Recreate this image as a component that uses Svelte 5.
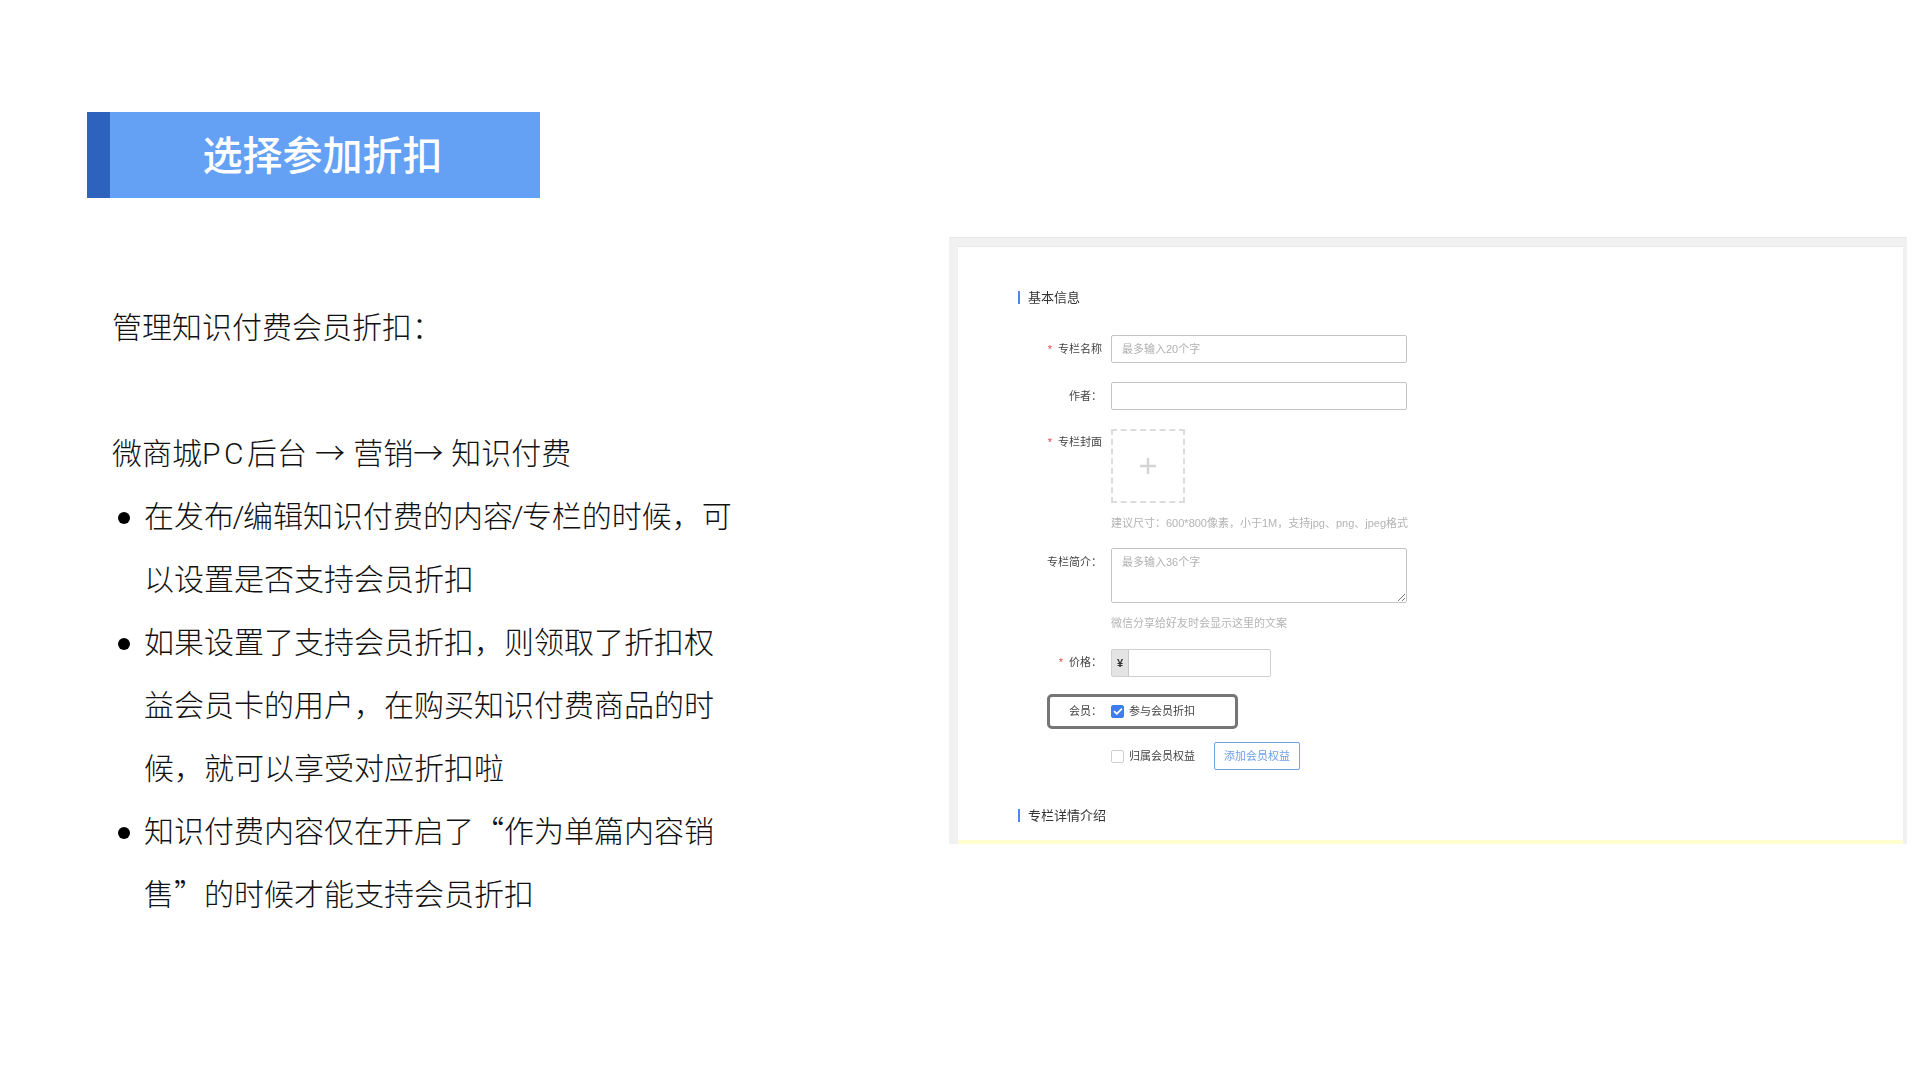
<script>
  const bullets = [
    '在发布/编辑知识付费的内容/专栏的时候，可以设置是否支持会员折扣',
    '如果设置了支持会员折扣，则领取了折扣权益会员卡的用户，在购买知识付费商品的时候，就可以享受对应折扣啦',
    '知识付费内容仅在开启了“作为单篇内容销售”的时候才能支持会员折扣'
  ];
</script>

<div class="page">
  <div class="left">
    <div class="banner"><h1>选择参加折扣</h1></div>
    <div class="copy">
      <p>管理知识付费会员折扣：</p>
      <p class="blank"></p>
      <p class="path">微商城<span class="latin">PC</span>后台 → 营销→ 知识付费</p>
      <ul>
        {#each bullets as item}
          <li>
            <span class="dot"></span>
            <span class="item">{#each item.split('/') as part, i}{#if i}<span class="slash">/</span>{/if}{part}{/each}</span>
          </li>
        {/each}
      </ul>
    </div>
  </div>

  <div class="shot">
    <div class="sheet">
      <div class="section first">基本信息</div>

      <div class="row name">
        <label><i>*</i>专栏名称</label>
        <div class="input wide placeholder">最多输入20个字</div>
      </div>

      <div class="row author">
        <label>作者：</label>
        <div class="input wide"></div>
      </div>

      <div class="row cover">
        <label><i>*</i>专栏封面</label>
        <div class="upload">
          <svg width="18" height="18" viewBox="0 0 18 18"><path d="M9 1v16M1 9h16" stroke="#d4d4d4" stroke-width="2.4" fill="none" /></svg>
        </div>
      </div>
      <div class="hint cover-hint">建议尺寸：600*800像素，小于1M，支持jpg、png、jpeg格式</div>

      <div class="row intro">
        <label>专栏简介：</label>
        <div class="textarea placeholder">
          最多输入36个字
          <svg class="grip" width="9" height="9" viewBox="0 0 9 9"><path d="M1 8l7-7M5 8l3-3" stroke="#777" stroke-width="1" fill="none" /></svg>
        </div>
      </div>
      <div class="hint intro-hint">微信分享给好友时会显示这里的文案</div>

      <div class="row price">
        <label><i>*</i>价格：</label>
        <div class="price-input"><span>¥</span></div>
      </div>

      <div class="row member">
        <span class="highlight"></span>
        <label>会员：</label>
        <div class="check-line">
          <span class="box on">
            <svg width="16" height="16" viewBox="0 0 16 16"><path d="M4 8.2l2.8 2.6L12 5.6" stroke="#fff" stroke-width="1.8" fill="none" /></svg>
          </span>
          参与会员折扣
        </div>
      </div>

      <div class="row rights">
        <label></label>
        <div class="check-line">
          <span class="box"></span>
          归属会员权益
          <span class="add">添加会员权益</span>
        </div>
      </div>

      <div class="section second">专栏详情介绍</div>
    </div>
  </div>
</div>

<style>
  :global(body) {
    margin: 0;
    background: #fff;
  }

  .page {
    width: 1920px;
    height: 1080px;
    box-sizing: border-box;
    padding: 112px 13px 0 87px;
    display: flex;
    font-family: "Noto Sans CJK SC", "Liberation Sans", sans-serif;
    overflow: hidden;
  }

  .left {
    width: 862px;
    flex-shrink: 0;
  }

  .banner {
    width: 453px;
    height: 86px;
    box-sizing: border-box;
    border-left: 23px solid #2d63bd;
    background: #64a1f5;
    display: flex;
    align-items: center;
    justify-content: center;
  }

  h1 {
    margin: 0;
    color: #fff;
    font-size: 40px;
    font-weight: 500;
    line-height: 1;
    padding: 0 5px 4px 0;
  }

  .copy {
    margin: 96px 0 0 25px;
    width: 628px;
    font-size: 30px;
    font-weight: 300;
    line-height: 63px;
    color: #111;
  }

  .copy p {
    margin: 0;
  }

  .path {
    word-spacing: 1.5px;
  }

  .latin,
  .slash {
    font-family: Roboto, "Liberation Sans", sans-serif;
    line-height: 1;
  }

  .latin {
    letter-spacing: 3.5px;
  }

  .slash {
    margin: 0 -1.5px;
  }

  .blank {
    height: 63px;
  }

  ul {
    margin: 0;
    padding: 0;
    list-style: none;
  }

  li {
    display: flex;
    gap: 14px;
  }

  .dot {
    width: 12px;
    height: 12px;
    margin: 29px 0 0 6px;
    border-radius: 50%;
    background: #000;
    flex-shrink: 0;
  }

  .item {
    flex: 1;
  }

  .shot {
    width: 958px;
    height: 607px;
    margin-top: 125px;
    box-sizing: border-box;
    padding: 8px 4px 0 9px;
    background: #f1f1f1;
    border-top: 1px solid #e6e6e6;
    flex-shrink: 0;
    display: flex;
  }

  .sheet {
    flex: 1;
    background: #fff;
    border-bottom: 4px solid #ffffcf;
    border-top: 1px solid #e8e8e8;
    font-family: "Liberation Sans", "Noto Sans CJK SC", sans-serif;
    font-size: 11px;
    color: #333;
    filter: blur(0.35px);
  }

  .section {
    height: 20px;
    margin-left: 60px;
    padding-left: 10px;
    font-size: 13px;
    line-height: 20px;
    position: relative;
  }

  .section::before {
    content: "";
    position: absolute;
    left: 0;
    top: 3px;
    width: 2px;
    height: 13px;
    background: #4f86ea;
  }

  .first {
    margin-top: 41px;
  }

  .second {
    margin-top: 36px;
  }

  .row {
    display: grid;
    grid-template-columns: 144px 1fr;
    column-gap: 9px;
    position: relative;
  }

  label {
    text-align: right;
    line-height: 16px;
    color: #444;
  }

  label i {
    font-style: normal;
    color: #e0474a;
    margin-right: 6px;
  }

  .name {
    margin-top: 27px;
  }

  .name label,
  .author label {
    padding-top: 6px;
  }

  .author {
    margin-top: 19px;
  }

  .cover {
    margin-top: 19px;
  }

  .cover label {
    padding-top: 5px;
  }

  .intro label {
    padding-top: 6px;
  }

  .input {
    height: 28px;
    box-sizing: border-box;
    border: 1px solid #c4c4c4;
    border-radius: 2px;
    padding-left: 10px;
    line-height: 26px;
  }

  .wide {
    width: 296px;
  }

  .placeholder {
    color: #b0b0b0;
  }

  .upload {
    width: 74px;
    height: 74px;
    box-sizing: border-box;
    border: 2px dashed #dcdcdc;
    display: flex;
    align-items: center;
    justify-content: center;
  }

  .hint {
    margin-left: 153px;
    line-height: 16px;
    color: #b4b4b4;
  }

  .cover-hint {
    margin-top: 12px;
  }

  .intro {
    margin-top: 17px;
  }

  .textarea {
    width: 296px;
    height: 55px;
    box-sizing: border-box;
    border: 1px solid #c4c4c4;
    border-radius: 2px;
    padding: 5px 10px;
    line-height: 16px;
    position: relative;
  }

  .grip {
    position: absolute;
    right: 0;
    bottom: 0;
  }

  .intro-hint {
    margin-top: 12px;
  }

  .price {
    margin-top: 18px;
  }

  .price label {
    padding-top: 5px;
  }

  .price-input {
    width: 160px;
    height: 28px;
    box-sizing: border-box;
    border: 1px solid #d0d0d0;
    border-radius: 2px;
  }

  .price-input span {
    display: block;
    width: 16px;
    height: 26px;
    background: #e4e4e4;
    border-right: 1px solid #c8c8c8;
    text-align: center;
    line-height: 26px;
    font-weight: 700;
    font-size: 11px;
    color: #333;
  }

  .member {
    margin-top: 24px;
    height: 20px;
    align-items: center;
  }

  .highlight {
    position: absolute;
    left: 89px;
    top: -7px;
    width: 191px;
    height: 35px;
    box-sizing: border-box;
    border: 3px solid #767676;
    border-radius: 5px;
  }

  .check-line {
    display: flex;
    align-items: center;
    gap: 3px;
    line-height: 20px;
    color: #444;
  }

  .box {
    width: 13px;
    height: 13px;
    box-sizing: border-box;
    margin-right: 2px;
    border: 1px solid #cfcfcf;
    border-radius: 2px;
    background: #fff;
    display: flex;
    align-items: center;
    justify-content: center;
  }

  .box.on {
    background: #3f7cf0;
    border-color: #3f7cf0;
  }

  .box svg {
    flex-shrink: 0;
  }

  .rights {
    margin-top: 21px;
    height: 28px;
  }

  .add {
    width: 86px;
    height: 28px;
    box-sizing: border-box;
    margin-left: 16px;
    border: 1px solid #6ea0e8;
    border-radius: 2px;
    color: #6ea0e8;
    text-align: center;
    line-height: 27px;
  }
</style>
